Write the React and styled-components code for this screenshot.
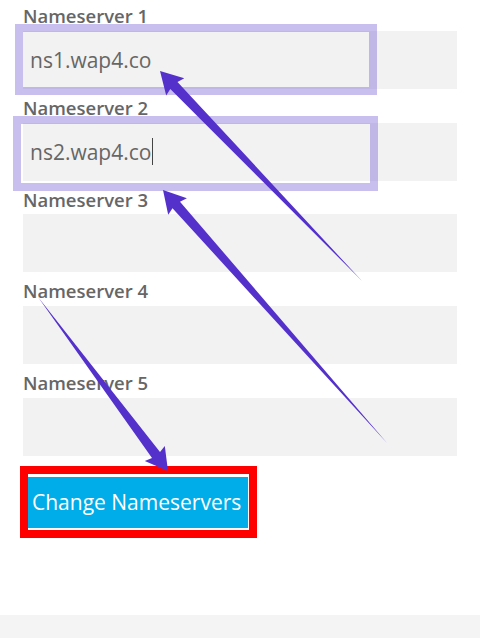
import React from "react";
import styled, { createGlobalStyle } from "styled-components";

const GlobalStyle = createGlobalStyle`
  html, body { margin: 0; padding: 0; background: #fff; }
  body { font-family: "Open Sans", "Liberation Sans", sans-serif; }
`;

const Page = styled.div`
  position: relative;
  width: 480px;
  height: 638px;
  overflow: hidden;
  background: #fff;
  display: flex;
  flex-direction: column;
`;

const Form = styled.form`
  display: flex;
  flex-direction: column;
  padding: 4px 23px 0 23px;
  height: 615px;
  box-sizing: border-box;
`;

const Field = styled.div`
  display: flex;
  flex-direction: column;
  margin-bottom: 7px;
`;

const Label = styled.label`
  font-size: 18.5px;
  font-weight: 600;
  line-height: 24px;
  color: #666;
  margin-bottom: 2.75px;
`;

const TextBox = styled.div`
  height: 58px;
  width: 434px;
  background: #f2f2f2;
  display: flex;
  align-items: center;
  padding-left: 7px;
  box-sizing: border-box;
  font-size: 21px;
  color: #666;
`;

const Caret = styled.span`
  display: inline-block;
  width: 1px;
  height: 27px;
  background: #444;
  margin-left: 1px;
`;

const Button = styled.button`
  margin: 14px 0 0 5px;
  align-self: flex-start;
  width: 220px;
  height: 51px;
  padding: 0 0 0 4px;
  border: none;
  background: #00ade8;
  color: #fff;
  font-family: "Open Sans", "Liberation Sans", sans-serif;
  font-size: 21px;
  text-align: left;
  cursor: pointer;
`;

const Footer = styled.footer`
  flex: 1;
  background: #f4f4f4;
`;

const Highlight = styled.div`
  position: absolute;
  left: ${(p) => p.$x}px;
  top: ${(p) => p.$y}px;
  width: ${(p) => p.$w}px;
  height: ${(p) => p.$h}px;
  box-sizing: border-box;
  border: 8px solid ${(p) => p.$color};
  pointer-events: none;
`;

const Overlay = styled.svg`
  position: absolute;
  left: 0;
  top: 0;
  pointer-events: none;
`;

function arrowPoints(tail, tip, headLen, headHalf, neckHalf) {
  const dx = tip[0] - tail[0];
  const dy = tip[1] - tail[1];
  const len = Math.hypot(dx, dy);
  const ux = dx / len;
  const uy = dy / len;
  const nx = -uy;
  const ny = ux;
  const bx = tip[0] - ux * headLen;
  const by = tip[1] - uy * headLen;
  const pts = [
    tail,
    [bx + nx * neckHalf, by + ny * neckHalf],
    [bx + nx * headHalf - ux * 2, by + ny * headHalf - uy * 2],
    tip,
    [bx - nx * headHalf - ux * 2, by - ny * headHalf - uy * 2],
    [bx - nx * neckHalf, by - ny * neckHalf],
  ];
  return pts.map((p) => p.map((v) => v.toFixed(1)).join(",")).join(" ");
}

const arrows = [
  { tail: [362, 281], tip: [160, 71] },
  { tail: [387, 443], tip: [163, 190] },
  { tail: [38, 297], tip: [168, 471] },
];

const servers = [
  { label: "Nameserver 1", value: "ns1.wap4.co" },
  { label: "Nameserver 2", value: "ns2.wap4.co", caret: true },
  { label: "Nameserver 3", value: "" },
  { label: "Nameserver 4", value: "" },
  { label: "Nameserver 5", value: "" },
];

export default function App() {
  return (
    <>
      <GlobalStyle />
      <Page>
        <Form onSubmit={(e) => e.preventDefault()}>
          {servers.map((s) => (
            <Field key={s.label}>
              <Label>{s.label}</Label>
              <TextBox>
                {s.value}
                {s.caret && <Caret />}
              </TextBox>
            </Field>
          ))}
          <Button type="submit">Change Nameservers</Button>
        </Form>
        <Footer />
        <Highlight $x={15} $y={24} $w={362} $h={71} $color="rgba(120, 95, 215, 0.4)" />
        <Highlight $x={13} $y={116} $w={365} $h={75} $color="rgba(120, 95, 215, 0.4)" />
        <Highlight $x={20} $y={466} $w={237} $h={72} $color="#ff0000" />
        <Overlay width="480" height="638" viewBox="0 0 480 638">
          {arrows.map((a, i) => (
            <polygon key={i} points={arrowPoints(a.tail, a.tip, 20, 12.5, 5)} fill="#5531cc" />
          ))}
        </Overlay>
      </Page>
    </>
  );
}
